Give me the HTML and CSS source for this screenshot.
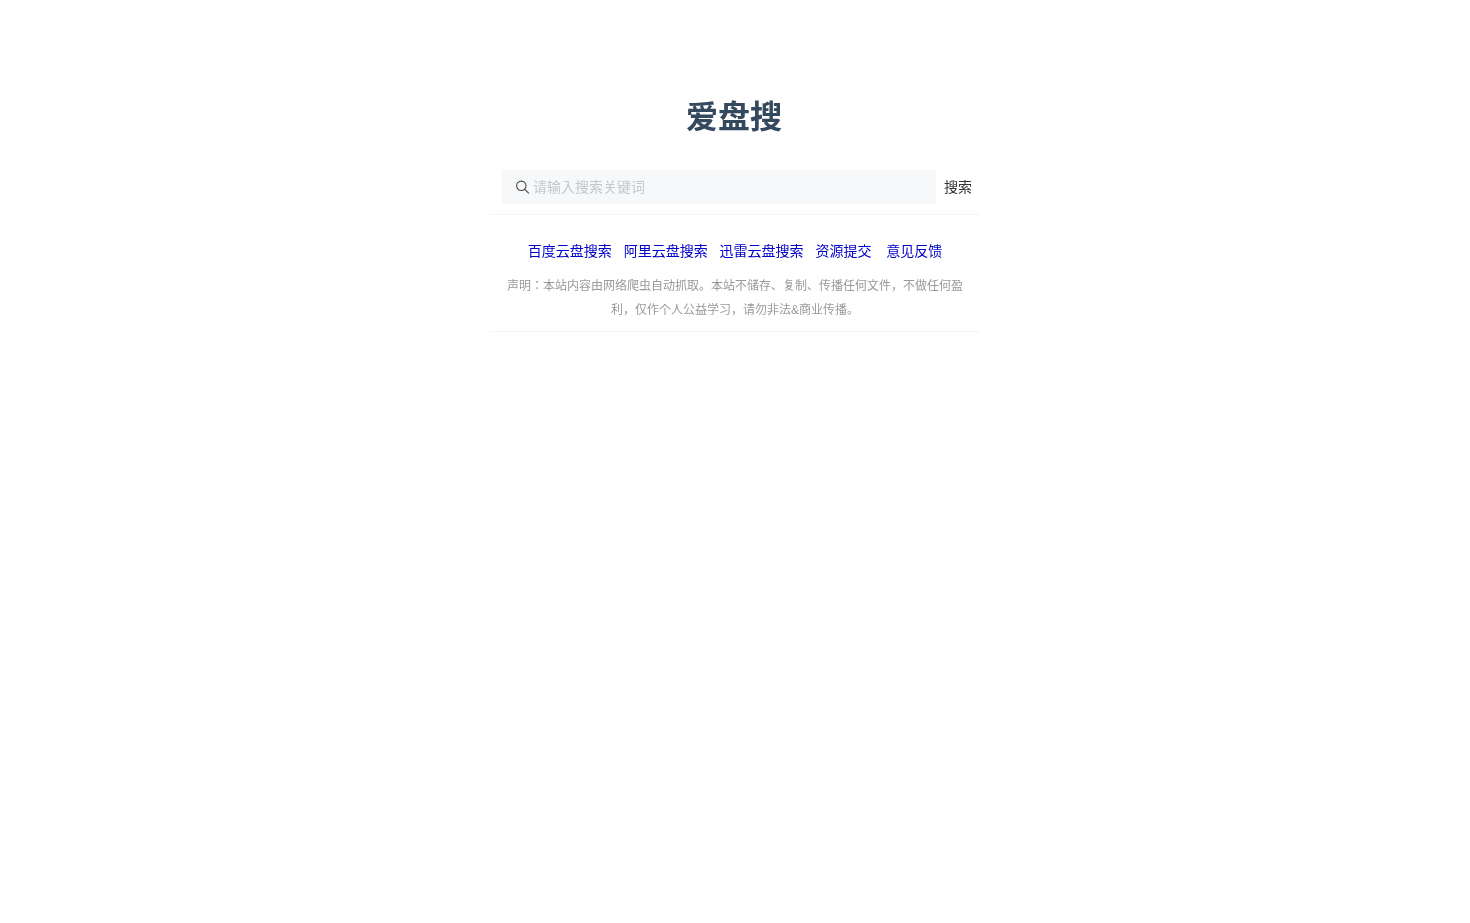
FILE: index.html
```html
<!DOCTYPE html>
<html>
<head>
	<meta charset="UTF-8">
	<title>爱盘搜</title>
	<link rel="stylesheet" href="styles.css">
</head>
<body>
<div id="box">
    <h1 class="logo">爱盘搜</h1>
    <div class="search">
        <div class="searchInput">
            <svg class="icon" viewBox="0 0 14 14" width="14" height="14">
                <circle cx="5.3" cy="5.8" r="4.7" fill="none" stroke="#4a4a4a" stroke-width="1.1"/>
                <path d="M8.8 9.3L12.8 13.3" fill="none" stroke="#4a4a4a" stroke-width="1.2"/>
            </svg>
            <input type="text" placeholder="请输入搜索关键词">
        </div>
        <span class="searchBtn">搜索</span>
    </div>
    <!--/search-->
    <div class="info">
        <p class="links">
            <a href="#">百度云盘搜索</a>
            <a href="#">阿里云盘搜索</a>
            <a href="#">迅雷云盘搜索</a>
            <a href="#">资源提交</a>
            &nbsp;<a href="#" class="last">意见反馈</a>
        </p>
        <p class="desc">声明：本站内容由网络爬虫自动抓取。本站不储存、复制、传播任何文件，不做任何盈利，仅作个人公益学习，请勿非法&amp;商业传播。</p>
    </div>
    <!--/info-->
</div>
<!--/box-->
</body>
</html>
```

FILE: styles.css
```css
body,div,h1,p {margin:0;padding:0;}
body {
	background:#fff;
	font:14px/1.5 "Liberation Sans","Noto Sans CJK JP",sans-serif;
}
#box {
	width:490px;
	margin:0 auto;
	padding-top:94px;
	will-change:opacity;
}
.logo {
	height:46px;
	padding-right:2px;
	line-height:46px;
	font-size:32px;
	font-weight:bold;
	text-align:center;
	color:#35495e;
}
.search {
	display:flex;
	align-items:center;
	height:34px;
	margin-top:30px;
	padding:0 8px 10px 12px;
	border-bottom:1px solid #f5f5f5;
}
.searchInput {
	display:flex;
	align-items:center;
	flex:1;
	height:34px;
	padding-left:14px;
	background:#f7f8f9;
}
.searchInput .icon {
	flex:none;
	margin-right:3px;
}
.searchInput input {
	flex:1;
	min-width:0;
	padding:0;
	border:0;
	outline:0;
	background:transparent;
	font:14px "Liberation Sans","Noto Sans CJK JP",sans-serif;
}
.searchInput input::placeholder {
	color:#c4c6c9;
}
.searchBtn {
	margin-left:8px;
	color:#333;
}
.info {
	padding:26px 12px 9px;
	border-bottom:1px solid #f5f5f5;
	text-align:center;
}
.links {
	height:20px;
	line-height:21px;
}
.links a {
	margin:0 4px;
	color:#0000c8;
	text-decoration:none;
}
.links .last {
	margin-left:3px;
}
.desc {
	margin-top:13px;
	font-size:12px;
	line-height:24px;
	color:#999;
}
```
